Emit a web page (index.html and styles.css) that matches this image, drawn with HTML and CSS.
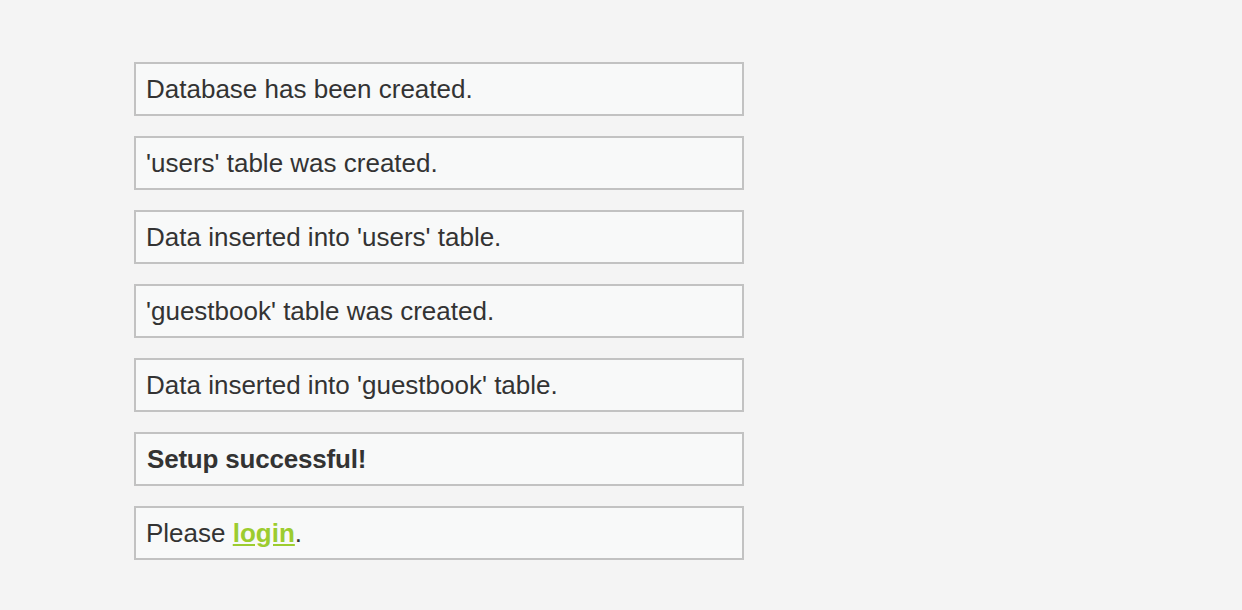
FILE: index.html
```html
<!DOCTYPE html>
<html>
<head>
<meta charset="utf-8">
<link rel="stylesheet" href="styles.css">
</head>
<body>
<div class="wrap">
  <div class="msg">Database has been created.</div>
  <div class="msg">'users' table was created.</div>
  <div class="msg">Data inserted into 'users' table.</div>
  <div class="msg">'guestbook' table was created.</div>
  <div class="msg">Data inserted into 'guestbook' table.</div>
  <div class="msg"><b>Setup successful!</b></div>
  <div class="msg">Please <a href="#" class="link">login</a>.</div>
</div>
</body>
</html>
```
FILE: styles.css
```css
html, body {
  margin: 0;
  padding: 0;
  background: #f4f4f4;
}
body {
  font-family: "Liberation Sans", Arial, sans-serif;
  font-size: 26px;
  color: #333333;
}
.wrap {
  padding: 62px 0 0 134px;
  display: flex;
  flex-direction: column;
  gap: 20px;
}
.msg {
  width: 586px;
  height: 50px;
  line-height: 50px;
  box-sizing: content-box;
  padding: 0 10px;
  border: 2px solid #c2c2c2;
  background: #f8f9f9;
  white-space: nowrap;
}
.msg b {
  padding-left: 1px;
  letter-spacing: -0.2px;
}
.link {
  color: #9ccc2f;
  font-weight: bold;
  text-decoration: underline;
}
```
